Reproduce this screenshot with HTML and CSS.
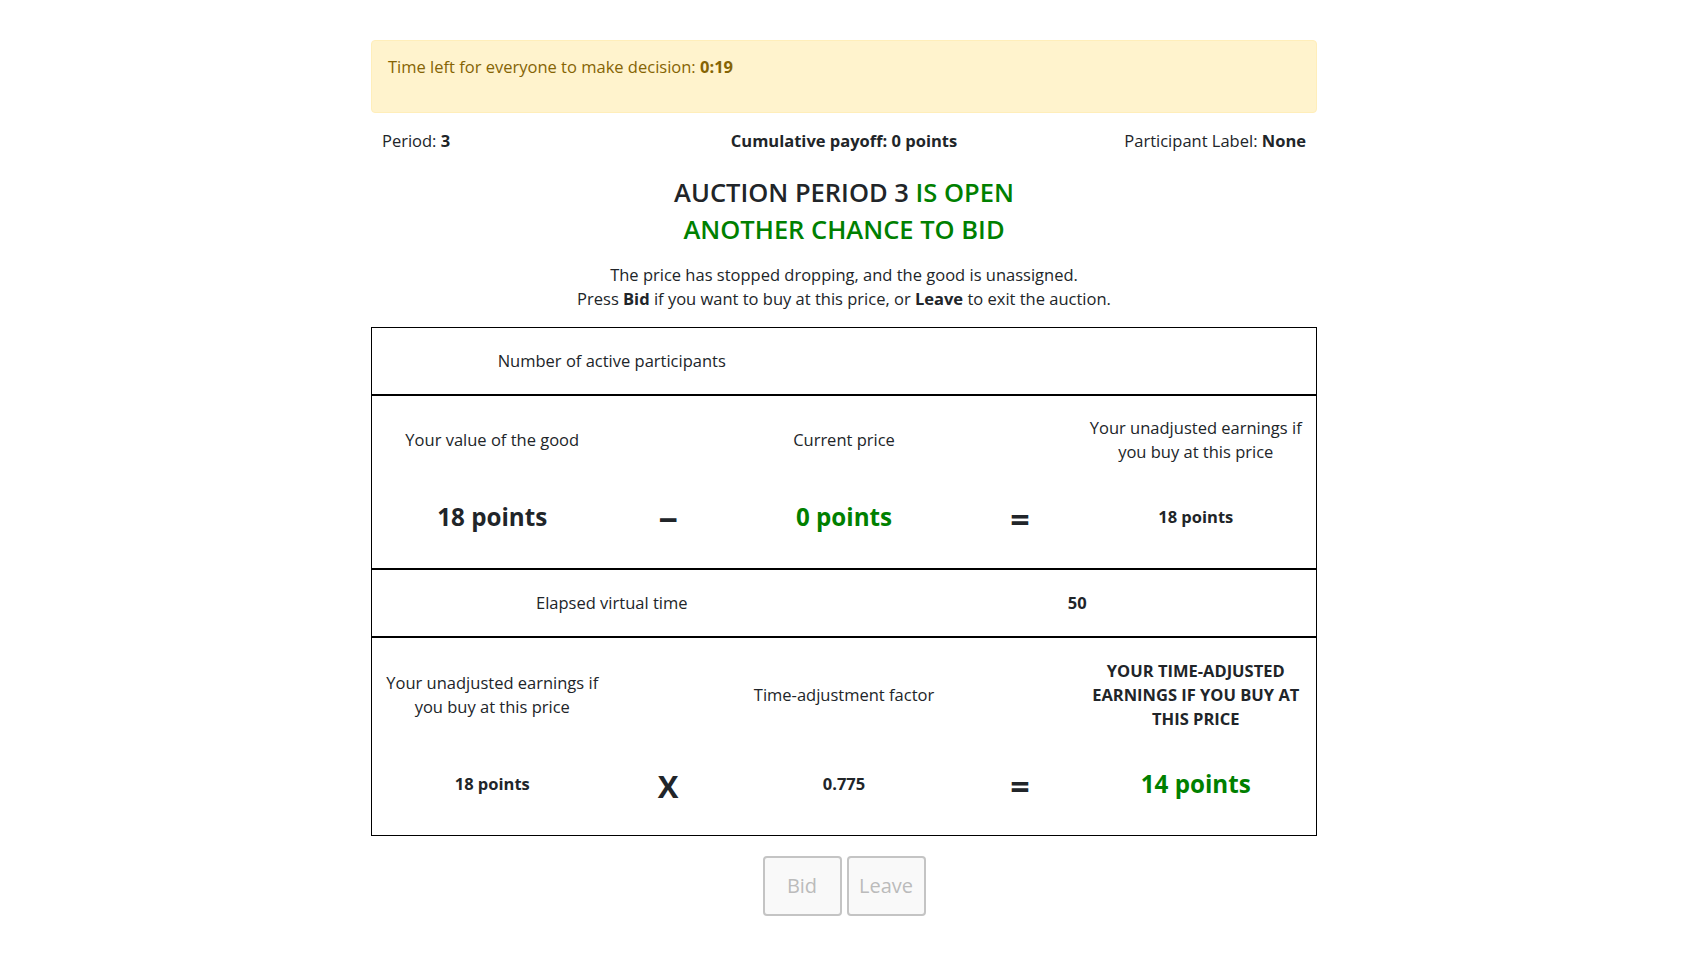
FILE: index.html
```html
<!DOCTYPE html>
<html lang="en">
<head>
<meta charset="utf-8">
<title>Auction</title>
<link rel="stylesheet" href="styles.css">
</head>
<body>
<div class="container">
  <div class="alert">
    <p>Time left for everyone to make decision: <b>0:19</b></p>
  </div>

  <div class="info">
    <div class="info-left">Period: <b>3</b></div>
    <div class="info-mid"><b>Cumulative payoff: 0 points</b></div>
    <div class="info-right">Participant Label: <b>None</b></div>
  </div>

  <h4 class="title">AUCTION PERIOD 3 <span class="green">IS OPEN</span><br><span class="green">ANOTHER CHANCE TO BID</span></h4>

  <p class="intro">The price has stopped dropping, and the good is unassigned.<br>Press <b>Bid</b> if you want to buy at this price, or <b>Leave</b> to exit the auction.</p>

  <div class="panel">
    <div class="split">
      <div class="cell">Number of active participants</div>
      <div class="cell"></div>
    </div>

    <div class="calc">
      <div class="lbl">Your value of the good</div>
      <div class="lbl"></div>
      <div class="lbl">Current price</div>
      <div class="lbl"></div>
      <div class="lbl">Your unadjusted earnings if<br>you buy at this price</div>

      <div class="val big">18 points</div>
      <div class="val op">−</div>
      <div class="val big green">0 points</div>
      <div class="val op">=</div>
      <div class="val small">18 points</div>
    </div>

    <div class="split">
      <div class="cell">Elapsed virtual time</div>
      <div class="cell"><b>50</b></div>
    </div>

    <div class="calc">
      <div class="lbl">Your unadjusted earnings if<br>you buy at this price</div>
      <div class="lbl"></div>
      <div class="lbl">Time-adjustment factor</div>
      <div class="lbl"></div>
      <div class="lbl strong">YOUR TIME-ADJUSTED<br>EARNINGS IF YOU BUY AT<br>THIS PRICE</div>

      <div class="val small">18 points</div>
      <div class="val op times">X</div>
      <div class="val small">0.775</div>
      <div class="val op">=</div>
      <div class="val big green">14 points</div>
    </div>
  </div>

  <div class="buttons">
    <button class="btn" disabled>Bid</button>
    <button class="btn" disabled>Leave</button>
  </div>
</div>
</body>
</html>
```
FILE: styles.css
```css
body {
  margin: 0;
  background: #ffffff;
  color: #212529;
  font-family: "Open Sans", "Noto Sans", sans-serif;
  font-size: 16.5px;
  line-height: 25.8px;
}

.container {
  width: 946px;
  margin: 40px auto 0;
}

.alert {
  background: #fff3cd;
  border: 1px solid #ffeeba;
  border-radius: 4px;
  color: #856404;
  padding: 13px 16px 15px;
}

.alert p {
  margin: 0 0 17px;
}

.info {
  display: grid;
  grid-template-columns: 1fr auto 1fr;
  padding: 0 11px;
  margin-top: 15px;
}

.info-right {
  text-align: right;
}

.title {
  margin: 20.5px 0 0;
  text-align: center;
  font-size: 25.5px;
  font-weight: 600;
  line-height: 36.5px;
}

.green {
  color: #008000;
}

.intro {
  margin: 15.5px 0 0;
  text-align: center;
  line-height: 24px;
}

.panel {
  margin-top: 16.25px;
  border: 1px solid #000000;
}

.panel > * + * {
  border-top: 2px solid #000000;
}

.split {
  display: grid;
  grid-template-columns: 1fr 1fr;
  align-items: center;
  height: 66px;
  padding: 0 6px 0 7px;
  text-align: center;
}

.calc {
  display: grid;
  grid-template-columns: 25% 12.5% 25% 12.5% 25%;
  align-items: center;
  row-gap: 36px;
  padding: 20.5px 3px 34px;
  text-align: center;
}

.lbl {
  line-height: 24px;
  white-space: nowrap;
}

.lbl.strong {
  font-weight: 700;
}

.val {
  box-sizing: border-box;
  line-height: 34px;
  height: 34px;
  font-weight: 700;
}

.val.big {
  font-size: 24.2px;
}

.val.small {
  font-size: 16.5px;
}

.val.op {
  font-size: 34px;
  padding-top: 2px;
  overflow: visible;
}

.val.times {
  font-size: 31px;
}

.buttons {
  display: flex;
  justify-content: center;
  gap: 5px;
  margin-top: 20px;
}

.btn {
  width: 79px;
  height: 60px;
  padding: 0;
  border: 2px solid #c4c4c4;
  border-radius: 4px;
  background: #f9f9f9;
  color: #bbbbbb;
  font-family: "Open Sans", "Noto Sans", sans-serif;
  font-size: 20px;
}
```
